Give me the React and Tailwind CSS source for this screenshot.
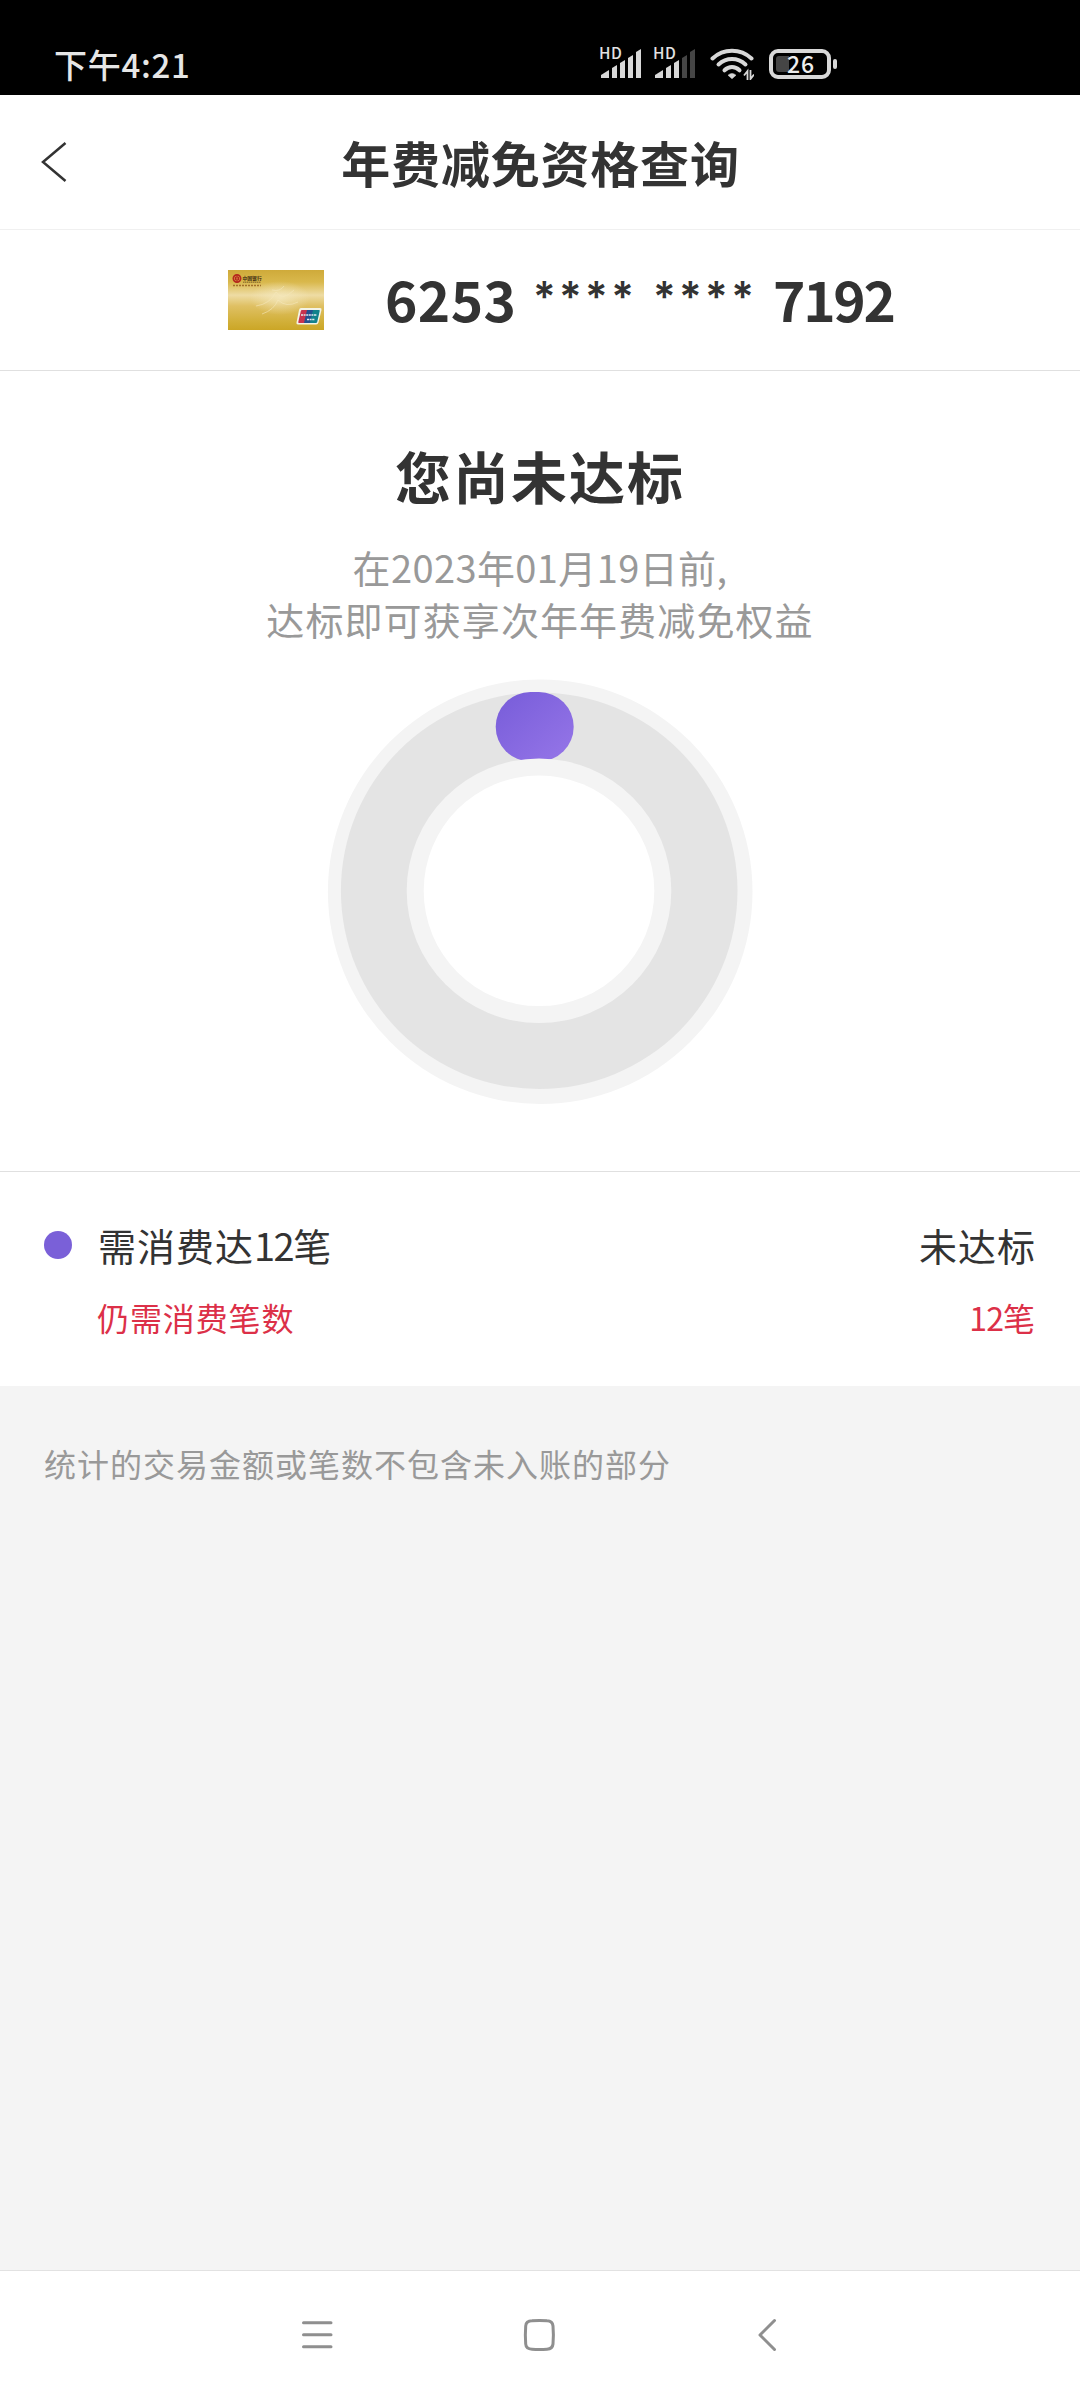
import React from 'react';

const conditions = [
    { id: 1, title: ['需消费达', '12', '笔'], status: '未达标', label: '仍需消费笔数', value: ['12', '笔'], dot: 'bg-[#7a60d8]' },
];

const SignalIcon = ({ level }) => {
    const bars = [
        'M1 30v-3l8-5v8z',
        'M12 30v-10l5-3v13z',
        'M20 30v-15l5-3v18z',
        'M28 30v-20l5-3v23z',
        'M36 30v-26l5-3v29z',
    ];
    return (
        <svg className="overflow-visible" width="42" height="31" viewBox="0 0 42 31">
            {bars.map((d, idx) => (
                <path key={idx} d={d} fill={idx < level ? '#d8d8d8' : '#454545'} />
            ))}
            <text x="-1" y="11" fontSize="15.500" fontWeight="500" letterSpacing="0.600" fill="#e2e2e2" fontFamily="Noto Sans CJK SC, sans-serif">HD</text>
        </svg>
    );
};

const WifiIcon = () => (
    <svg width="44" height="32" viewBox="0 0 44 32" fill="none" stroke="#d8d8d8">
        <path d="M2.500 10.500C13.500 .2 30.500 .2 41.500 10.500" strokeWidth="4" strokeLinecap="round" />
        <path d="M8.500 16.500C16.500 9.200 27.500 9.200 35.500 16.500" strokeWidth="4" strokeLinecap="round" />
        <path d="M14.500 22.300C19 18 25 18 29.500 22.300" strokeWidth="4" strokeLinecap="round" />
        <path d="M18 27.200q4-3.600 8 0l-4 3.600z" fill="#d8d8d8" strokeWidth="0.5" strokeLinejoin="round" />
        <path d="M37.500 32v-9l-3.500 4.500M40.500 22v9l3.500-4.500" strokeWidth="1.800" />
    </svg>
);

const Battery = ({ percent }) => (
    <div className="flex items-center gap-[2px]">
        <div className="flex h-[30px] w-[62px] items-center rounded-[9px] border-4 border-[#d8d8d8] pl-[3px]">
            <div className="h-4 w-[13px] shrink-0 rounded-l-[3px] bg-[#454545]" />
            <span className="-mt-[2px] -ml-[2px] text-[23px] leading-none font-medium tracking-[0.8px] text-[#eeeeee]">{percent}</span>
        </div>
        <div className="h-[10px] w-1 rounded-full bg-[#d8d8d8]" />
    </div>
);

const StatusBar = () => (
    <div className="flex h-[95px] bg-black pt-[48px] pl-[54px] text-[#e6e6e6]">
        <span className="-mt-[1px] w-[546px] text-[33px] leading-[34px] font-medium tracking-[0.7px] whitespace-nowrap">下午4:21</span>
        <div className="flex items-start">
            <SignalIcon level={5} />
            <div className="ml-3">
                <SignalIcon level={3} />
            </div>
            <div className="ml-[14px]">
                <WifiIcon />
            </div>
            <div className="mt-[1px] ml-[15px]">
                <Battery percent={26} />
            </div>
        </div>
    </div>
);

const BankCard = () => (
    <svg width="96" height="60" viewBox="0 0 96 60">
        <defs>
            <linearGradient id="gold" x1="0" y1="0" x2="0" y2="1">
                <stop offset="0" stopColor="#cfaa3a" />
                <stop offset="0.2" stopColor="#d9b84c" />
                <stop offset="0.42" stopColor="#eedca4" />
                <stop offset="0.6" stopColor="#dfc063" />
                <stop offset="0.85" stopColor="#d2b03a" />
                <stop offset="1" stopColor="#cba626" />
            </linearGradient>
            <radialGradient id="shine">
                <stop offset="0" stopColor="#f6ebc4" stopOpacity="0.7" />
                <stop offset="1" stopColor="#f6ebc4" stopOpacity="0" />
            </radialGradient>
        </defs>
        <rect width="96" height="60" fill="url(#gold)" />
        <ellipse cx="52" cy="28" rx="30" ry="17" fill="url(#shine)" />
        <path d="M28 36q14-2 20-14q6 10 18-2M34 44q12-4 16-14q8 8 20 2M44 20q8 2 12-4" fill="none" stroke="#f5e8bb" strokeWidth="1" opacity="0.6" />
        <circle cx="9" cy="8.500" r="3.600" fill="#e0a34c" stroke="#b5281e" strokeWidth="1.800" />
        <path d="M9 4.500v8M7.500 7h3v3h-3z" fill="none" stroke="#b5281e" strokeWidth="1" />
        <text x="14.500" y="9.500" fontSize="4.800" fontWeight="700" fill="#3c2b10">中国银行</text>
        <path d="M15 12.200h18" stroke="#7d6026" strokeWidth="1" strokeDasharray="1.500 .5" />
        <path d="M5 15.500h28" stroke="#a2702a" strokeWidth="1.400" strokeDasharray="2 1" />
        <path d="M73 38h19q2 0 1.500 2l-3 12.500q-.5 2-2.500 2h-18q-2 0-1.500-2l2.500-12.500q.5-2 2-2z" fill="#f3f3e6" />
        <path d="M74 40h6l-3 13h-6q-1 0-.7-1l2.500-11q.3-1 1.200-1z" fill="#c8324f" />
        <path d="M79 40h7l-3 13h-7z" fill="#24508f" />
        <path d="M85 40h6q1 0 .7 1l-2.500 11q-.3 1-1.300 1h-6z" fill="#12828c" />
        <path d="M73 45h16M79 49.500h8" stroke="#dfe9ee" strokeWidth="1.600" strokeDasharray="2 .6" />
    </svg>
);

const ProgressRing = () => (
    <svg width="426" height="426" viewBox="0 0 426 426">
        <defs>
            <linearGradient id="progress" x1="0" y1="0" x2="1" y2="1">
                <stop offset="0" stopColor="#775cd9" />
                <stop offset="1" stopColor="#9676e8" />
            </linearGradient>
        </defs>
        <circle cx="213.200" cy="212.700" r="212.300" fill="#f4f4f4" />
        <circle cx="212.200" cy="211.700" r="198.300" fill="#e4e4e4" />
        <rect x="168.700" y="13" width="78" height="69.500" rx="34.700" fill="url(#progress)" />
        <circle cx="212" cy="211.800" r="132.300" fill="#f4f4f4" />
        <circle cx="212" cy="211.800" r="115.300" fill="#ffffff" />
    </svg>
);

const NavBar = () => (
    <div className="flex h-[130px] border-t border-[#e2e2e2] bg-white pt-[47px] pl-[301px]">
        <svg width="32" height="36" viewBox="0 0 32 36" fill="none" stroke="#8f8f8f" strokeWidth="3" strokeLinecap="round">
            <path d="M2.500 4.700h27.500M2.500 16.700h27.500M2.500 28.700h27.500" />
        </svg>
        <svg className="ml-[190px]" width="34" height="36" viewBox="0 0 34 36" fill="none" stroke="#8f8f8f" strokeWidth="3">
            <path d="M9 2.700Q16.500 2.200 24 2.700Q29.500 2.700 30 8Q30.800 17 30 26Q29.500 31 24 31.200Q16.500 31.800 9 31.200Q3 31 2.700 26Q2 17 2.700 8Q3 2.700 9 2.700z" />
        </svg>
        <svg className="ml-[200px]" width="20" height="36" viewBox="0 0 20 36" fill="none" stroke="#8f8f8f" strokeWidth="3" strokeLinecap="round" strokeLinejoin="round">
            <path d="M17.500 2.500L3 17L17.500 31.500" />
        </svg>
    </div>
);

const App = () => {
    return (
        <div className="flex h-[2400px] w-[1080px] flex-col overflow-hidden bg-[#f4f4f4] font-['Noto_Sans_CJK_SC',sans-serif] text-[#333333]">
            <StatusBar />

            {/* Header */}
            <div className="flex h-[135px] items-center border-b border-[#f0f0f0] bg-white">
                <svg className="ml-10" width="28" height="44" viewBox="0 0 28 44" fill="none" stroke="#333333" strokeWidth="2.500">
                    <path d="M25.500 3L3 22L25.500 41" />
                </svg>
                <h1 className="mr-[67px] flex-1 text-center text-[49px] leading-[60px] font-bold tracking-[0.8px]">年费减免资格查询</h1>
            </div>

            {/* Card number */}
            <div className="flex h-[141px] items-center border-b border-[#e0e0e0] bg-white pl-[228px]">
                <BankCard />
                <div className="ml-[61px] flex pb-[4px] text-[55px] leading-[60px] font-bold whitespace-nowrap">
                    <span className="w-[148px] tracking-[0.4px]">6253</span>
                    <span className="w-[120px] font-['Inter',sans-serif] text-[42px] leading-[58px] font-semibold tracking-[3.4px]">****</span>
                    <span className="w-[120px] font-['Inter',sans-serif] text-[42px] leading-[58px] font-semibold tracking-[3.4px]">****</span>
                    <span className="tracking-[-2.3px]">7192</span>
                </div>
            </div>

            {/* Result */}
            <div className="flex h-[801px] flex-col items-center border-b border-[#e0e0e0] bg-white pt-[64px]">
                <h2 className="text-[56px] leading-[80px] font-bold tracking-[2px]">您尚未达标</h2>
                <p className="mt-[26px] text-center text-[38px] leading-[52px] text-[#999999]">
                    <span className="tracking-[0.4px]">在2023年01月19日前,</span>
                    <br />
                    <span className="tracking-[1.1px]">达标即可获享次年年费减免权益</span>
                </p>
                <div className="mt-[34px]">
                    <ProgressRing />
                </div>
            </div>

            {/* Conditions */}
            {conditions.map((item) => (
                <div key={item.id} className="h-[214px] bg-white pt-[48px] pr-[45px] pl-11">
                    <div className="flex h-[52px] items-center text-[38px] leading-[52px] tracking-[1px]">
                        <span className={`mr-[26px] -mt-[2px] h-7 w-7 rounded-full ${item.dot}`} />
                        <span className="flex-1 pb-[2px]">
                            {item.title[0]}
                            <span className="tracking-[-1.5px]">{item.title[1]}</span>
                            {item.title[2]}
                        </span>
                        <span className="-mr-[1px] pb-[2px]">{item.status}</span>
                    </div>
                    <div className="mt-[19px] flex justify-between pl-[53px] text-[32px] leading-[52px] tracking-[0.9px] text-[#dc3048]">
                        <span>{item.label}</span>
                        <span className="-mr-[1px]">
                            <span className="tracking-[-0.9px]">{item.value[0]}</span>
                            {item.value[1]}
                        </span>
                    </div>
                </div>
            ))}

            <p className="flex-1 pt-[51px] pl-11 text-[32px] leading-[52px] tracking-[1px] text-[#999999]">
                统计的交易金额或笔数不包含未入账的部分
            </p>

            <NavBar />
        </div>
    );
};

export default App;
